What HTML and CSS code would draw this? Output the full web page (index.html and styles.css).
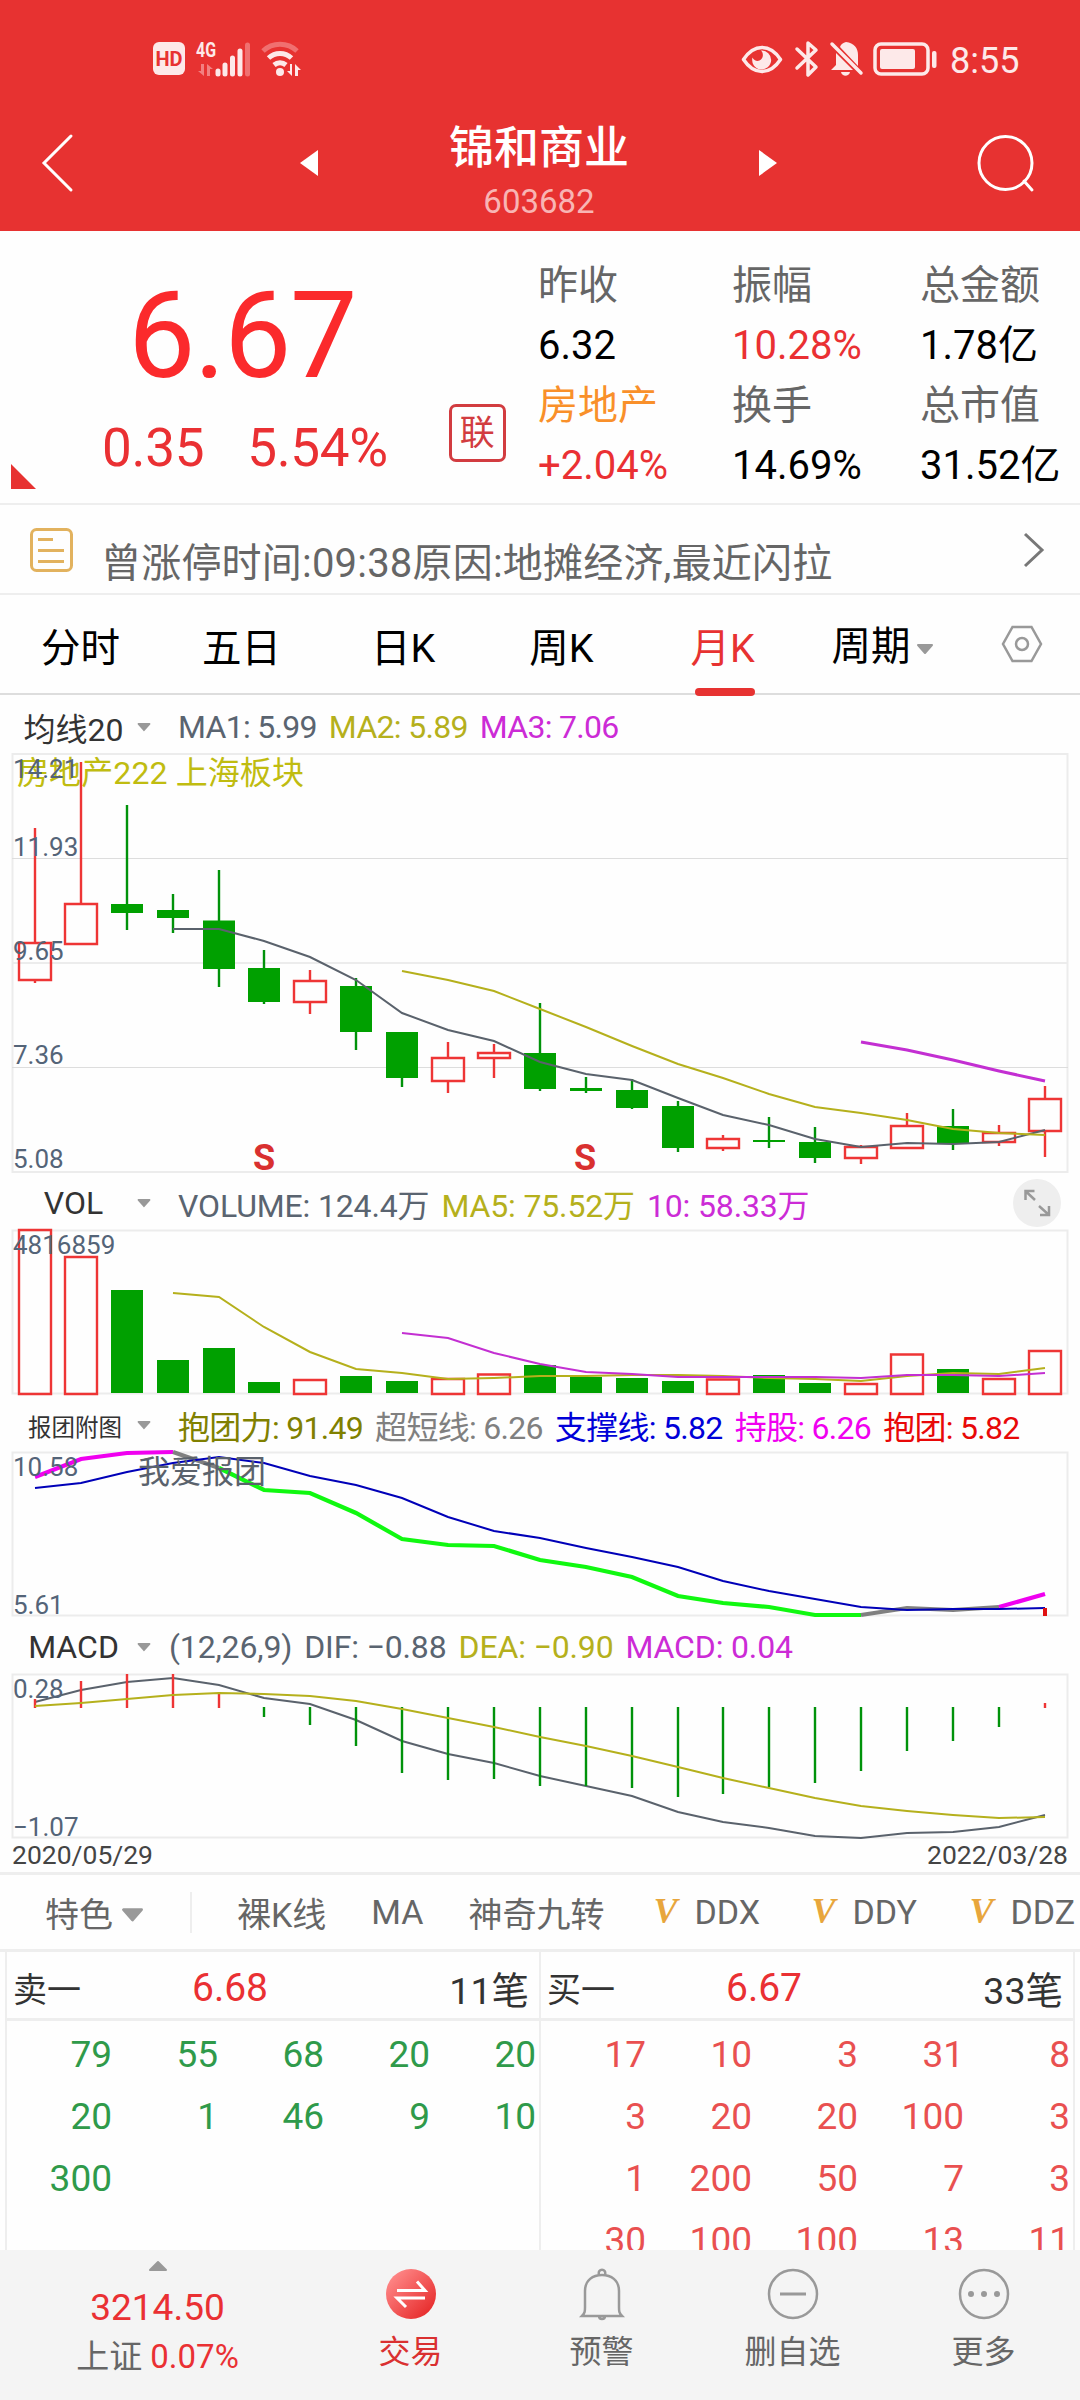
FILE: index.html
```html
<!DOCTYPE html>
<html lang="zh-CN">
<head>
  <meta charset="UTF-8">
  <meta name="viewport" content="width=device-width, initial-scale=1.0">
  <title>锦和商业 603682</title>
  <link rel="stylesheet" href="styles.css">
</head>
<body>
  <header class="top">
    <div class="status-bar">
      <div class="status-left">
        <span class="hd">HD</span>
        <svg class="signal" width="56" height="36" viewBox="0 0 56 36">
          <text x="1" y="16" class="net" textLength="20" lengthAdjust="spacingAndGlyphs">4G</text>
          <path class="dim" d="M9 23v12l-6-5h3v-7zM12 35V23l6 5h-3v7z"/>
          <path class="bars" d="M23 30v3M30 24v9M37.500 17v16M45 10v23"/>
          <path class="bars dim-line" d="M52.500 4v29"/>
        </svg>
        <svg class="wifi" width="42" height="36" viewBox="0 0 42 36">
          <path class="arc dim-line" d="M3 10a25 25 0 0 1 34 0"/>
          <path class="arc" d="M8.500 17a17 17 0 0 1 23 0M14 24a9.500 9.500 0 0 1 12 0"/>
          <circle cx="20" cy="31" r="4" fill="#fde9e9"/>
          <path d="M32 23v12l-5-5h3v-7zM35 35V23l6 6h-3v6z" fill="#fde9e9"/>
        </svg>
      </div>
      <div class="status-right">
        <svg width="42" height="36" viewBox="0 0 42 36">
          <path class="ln" d="M2.500 18.500C13 2.500 29 2.500 39.500 18.500C29 34.500 13 34.500 2.500 18.500z"/>
          <path d="M20 9.500a9.500 9.500 0 1 1-8.500 7c1.500 3.500 6 4.500 8.500 2s2.500-6.500 0-9z" fill="#fde9e9"/>
        </svg>
        <svg class="bt" width="24" height="38" viewBox="0 0 24 38">
          <path class="ln" d="M3 9l19 18-8 8V3l8 7L3 28"/>
        </svg>
        <svg class="mute" width="34" height="38" viewBox="0 0 34 38">
          <path d="M17 2c8 1 12 6 12 13v11L11 7c1-3 3-4 6-5zM7 13l17 17H2l5-5zM12 32h9c-1 5-8 5-9 0z" fill="#fde9e9"/>
          <path class="ln" d="M3 4l29 29"/>
        </svg>
        <svg class="battery" width="64" height="36" viewBox="0 0 64 36">
          <rect class="ln" x="2" y="3" width="53" height="30" rx="6"/>
          <rect x="7" y="8" width="35" height="20" rx="2" fill="#fde9e9"/>
          <rect x="59" y="10" width="4.500" height="17" rx="2" fill="#fde9e9"/>
        </svg>
        <span class="time">8:55</span>
      </div>
    </div>
    <div class="title-bar">
      <svg class="back" width="32" height="58" viewBox="0 0 32 58"><path d="M29 2L2 29l27 27"/></svg>
      <svg class="prev" width="20" height="28" viewBox="0 0 20 28"><path d="M19 1v26L1 14z"/></svg>
      <div class="stock">
        <h1>锦和商业</h1>
        <span class="code">603682</span>
      </div>
      <svg class="next" width="20" height="28" viewBox="0 0 20 28"><path d="M1 1v26l18-13z"/></svg>
      <svg class="search" width="58" height="58" viewBox="0 0 58 58">
        <circle cx="29.500" cy="29" r="26.500"/><path d="M48 47l8 9"/>
      </svg>
    </div>
  </header>

  <section class="quote">
    <svg class="corner" width="25" height="25" viewBox="0 0 25 25"><path d="M0 0l25 25H0z"/></svg>
    <div class="price">
      <div class="now">6.67</div>
      <div class="change"><span>0.35</span><span>5.54%</span></div>
    </div>
    <div class="badge">联</div>
    <dl class="facts">
      <div><dt>昨收</dt><dd>6.32</dd></div>
      <div><dt>振幅</dt><dd class="up">10.28%</dd></div>
      <div><dt>总金额</dt><dd>1.78亿</dd></div>
      <div><dt class="sector">房地产</dt><dd class="up">+2.04%</dd></div>
      <div><dt>换手</dt><dd>14.69%</dd></div>
      <div><dt>总市值</dt><dd>31.52亿</dd></div>
    </dl>
  </section>

  <section class="notice">
    <svg class="memo" width="44" height="46" viewBox="0 0 44 46">
      <rect x="1.500" y="2.500" width="40" height="41" rx="5"/>
      <path d="M8 12.500h15M8 23.500h26M8 34.500h26"/>
    </svg>
    <p>曾涨停时间:09:38原因:地摊经济,最近闪拉</p>
    <svg class="chevron" width="24" height="36" viewBox="0 0 24 36"><path d="M3 2l17 16L3 34"/></svg>
  </section>

  <nav class="tabs">
    <a>分时</a>
    <a>五日</a>
    <a>日K</a>
    <a>周K</a>
    <a class="active">月K</a>
    <a class="more">周期<svg class="caret" width="20" height="13" viewBox="0 0 20 13"><path d="M3 2h14l-7 8z"/></svg></a>
    <svg class="settings" width="42" height="38" viewBox="0 0 42 38">
      <path d="M11.500 2h19L40 19l-9.500 17h-19L2 19z"/><circle cx="21" cy="19" r="6"/>
    </svg>
  </nav>

  <main class="charts">
    <div class="legend l-ma">
      <span class="picker"><b>均线20</b></span>
      <svg class="caret" width="16" height="11" viewBox="0 0 20 13"><path d="M3 2h14l-7 8z"/></svg>
      <span class="c-gray">MA1: 5.99</span>
      <span class="c-olive">MA2: 5.89</span>
      <span class="c-purple">MA3: 7.06</span>
    </div>
    <svg class="chart" width="1080" height="420" viewBox="0 0 1080 420">
      <rect class="frame" x="12.500" y="1" width="1055" height="418"/>
      <path class="grid" d="M12 105.500H1068M12 314.500H1068"/>
      <path class="grid thick" d="M12 210H1068"/>
      <text class="tag" x="17" y="31" textLength="287">房地产222 上海板块</text>
      <path class="red" d="M35 75V190M35 227V230M81 9V151M310 217V228M310 249V261M448 289V305M448 328V340M494 291V300M494 305V325M723 382V386M723 395V398M861 392V394M861 405V411M907 360V373M999 372V380M999 389V393M1045 333V346M1045 378V404"/>
      <path class="red" d="M19 190h32v37h-32zM65 151h32v40h-32zM294 228h32v21h-32zM432 305h32v23h-32zM478 300h32v5h-32zM707 386h32v9h-32zM845 394h32v11h-32zM891 373h32v22h-32zM983 380h32v9h-32zM1029 346h32v32h-32z"/>
      <path class="green" d="M127 52V177M173 141V180M219 117V234M264 197V251M356 225V297M402 279V334M540 250V338M586 324V340M632 326V356M678 348V399M769 364V395M815 374V410M953 356V397"/>
      <path class="green-fill" d="M111 151h32v9h-32zM157 157h32v8h-32zM203 167.500h32v48.500h-32zM248 215h32v34h-32zM340 233h32v46h-32zM386 279h32v46h-32zM524 300h32v36h-32zM570 335h32v3h-32zM616 337h32v18h-32zM662 353h32v42h-32zM753 387h32v2h-32zM799 389h32v16h-32zM937 373h32v17h-32z"/>
      <polyline class="line gray" points="173,176 219,176 264,188 310,204 356,227 402,260 448,277 494,288 540,309 586,321 632,327 678,345 723,362 769,372 815,386 861,394 907,390 953,391 999,389 1045,377"/>
      <polyline class="line olive" points="402,218 448,227 494,238 540,256 586,274 632,293 678,311 723,325 769,341 815,354 861,360 907,367 953,376 999,380 1045,382"/>
      <polyline class="line purple bold" points="861,289 907,297 953,307 999,318 1045,328"/>
      <text class="axis" x="13" y="25">14.21</text>
      <text class="axis" x="13" y="103">11.93</text>
      <text class="axis" x="13" y="207">9.65</text>
      <text class="axis" x="13" y="311">7.36</text>
      <text class="axis" x="13" y="415">5.08</text>
      <text class="sell" x="264" y="417">S</text>
      <text class="sell" x="585" y="417">S</text>
    </svg>

    <div class="legend l-vol">
      <span class="picker"><b>VOL</b></span>
      <svg class="caret" width="16" height="11" viewBox="0 0 20 13"><path d="M3 2h14l-7 8z"/></svg>
      <span class="c-gray">VOLUME: 124.4万</span>
      <span class="c-olive">MA5: 75.52万</span>
      <span class="c-purple">10: 58.33万</span>
      <svg class="expand" width="48" height="48" viewBox="0 0 48 48">
        <circle cx="24" cy="24" r="24"/>
        <path d="M22 21L13 12.500M12.500 21v-9h9M26 27l9.500 8.500M36 27v9h-9"/>
      </svg>
    </div>
    <svg class="chart" width="1080" height="166" viewBox="0 0 1080 166">
      <rect class="frame" x="12.500" y="1.500" width="1055" height="163"/>
      <path class="red" d="M19 1h32v164h-32zM65 28h32v137h-32zM294 151h32v14h-32zM432 150h32v15h-32zM478 145.500h32v19.500h-32zM707 150.500h32v14.500h-32zM845 155h32v10h-32zM891 125.500h32v39.500h-32zM983 150h32v15h-32zM1029 122h32v43h-32z"/>
      <path class="green-fill" d="M111 61h32v103h-32zM157 131h32v33h-32zM203 119h32v45h-32zM248 153h32v11h-32zM340 147h32v17h-32zM386 152h32v12h-32zM524 136h32v28h-32zM570 148h32v16h-32zM616 149h32v15h-32zM662 152h32v12h-32zM753 146h32v18h-32zM799 154h32v10h-32zM937 140h32v24h-32z"/>
      <polyline class="line olive" points="173,64 219,68 264,98 310,123 356,140 402,144 448,150 494,149 540,147 586,147 632,146 678,146 723,147 769,149 815,150 861,152 907,147 953,144 999,145 1045,139"/>
      <polyline class="line purple" points="402,104 448,109 494,124 540,135 586,143 632,145 678,148 723,148 769,148 815,148 861,149 907,146 953,146 999,147 1045,144"/>
      <text class="axis" x="13" y="25">4816859</text>
    </svg>

    <div class="legend l-group">
      <span class="picker"><b class="small">报团附图</b></span>
      <svg class="caret" width="16" height="11" viewBox="0 0 20 13"><path d="M3 2h14l-7 8z"/></svg>
      <span class="c-brown">抱团力: 91.49</span>
      <span class="c-silver">超短线: 6.26</span>
      <span class="c-blue">支撑线: 5.82</span>
      <span class="c-magenta">持股: 6.26</span>
      <span class="c-red">抱团: 5.82</span>
    </div>
    <svg class="chart" width="1080" height="166" viewBox="0 0 1080 166">
      <rect class="frame" x="12.500" y="1.500" width="1055" height="163"/>
      <polyline class="line wide magenta" points="35,26 81,8 127,2 173,1"/>
      <polyline class="line wide silver" points="173,1 219,17"/>
      <polyline class="line wide lime" points="219,17 264,39 310,42 356,62 402,88 448,94 494,95 540,109 586,116 632,126 678,145 723,152 769,156 815,164 861,164"/>
      <polyline class="line wide silver" points="861,164 907,157 953,159 999,156"/>
      <polyline class="line wide magenta" points="999,156 1045,143"/>
      <polyline class="line blue" points="35,37 81,32 127,21 173,12 219,6 264,12 310,25 356,34 402,47 448,66 494,80 540,87 586,97 632,106 678,116 723,130 769,140 815,148 861,156 907,159 953,158 999,158 1045,157"/>
      <path class="hold" d="M1045 157v8"/>
      <text class="axis" x="13" y="25">10.58</text>
      <text class="axis" x="13" y="163">5.61</text>
      <text class="note" x="138" y="32">我爱报团</text>
    </svg>

    <div class="legend l-macd">
      <span class="picker"><b>MACD</b></span>
      <svg class="caret" width="16" height="11" viewBox="0 0 20 13"><path d="M3 2h14l-7 8z"/></svg>
      <span class="c-gray">(12,26,9)</span>
      <span class="c-gray">DIF: −0.88</span>
      <span class="c-olive">DEA: −0.90</span>
      <span class="c-purple">MACD: 0.04</span>
    </div>
    <svg class="chart" width="1080" height="166" viewBox="0 0 1080 166">
      <rect class="frame" x="12.500" y="1.500" width="1055" height="163"/>
      <polyline class="line gray" points="35,29 81,17 127,9 173,5 219,12 264,25 310,31 356,47 402,68 448,81 494,90 540,103 586,113 632,123 678,139 723,149 769,155 815,163 861,165 907,160 953,159 999,154 1045,142"/>
      <path class="red" d="M35 26V35M81 8V35M127 1V35M173 1V35M219 19V35M1045 30V35"/>
      <path class="green" d="M264 34V44M310 34V52M356 34V73M402 34V100M448 34V107M494 34V106M540 34V113M586 34V113M632 34V115M678 34V124M723 34V121M769 34V114M815 34V110M861 34V98M907 34V78M953 34V68M999 34V54"/>
      <polyline class="line olive" points="35,33 81,30 127,26 173,22 219,20 264,21 310,23 356,28 402,36 448,45 494,54 540,64 586,73 632,83 678,94 723,105 769,115 815,125 861,133 907,138 953,142 999,145 1045,144"/>
      <text class="axis" x="13" y="25">0.28</text>
      <text class="axis" x="13" y="163">−1.07</text>
    </svg>
    <div class="dates"><span>2020/05/29</span><span>2022/03/28</span></div>
  </main>

  <nav class="features">
    <a class="pick">特色<svg class="caret" width="27" height="17" viewBox="0 0 20 13"><path d="M3 2h14l-7 8z"/></svg></a>
    <a class="f-k">裸K线</a>
    <a class="f-ma">MA</a>
    <a class="f-nine">神奇九转</a>
    <a class="f-vip"><i>V</i>DDX</a>
    <a class="f-vip"><i>V</i>DDY</a>
    <a class="f-vip"><i>V</i>DDZ</a>
  </nav>

  <section class="orders">
    <div class="side sell-side">
      <div class="head"><span>卖一</span><span class="up">6.68</span><span>11笔</span></div>
      <div class="lots">
        <span>79</span><span>55</span><span>68</span><span>20</span><span>20</span>
        <span>20</span><span>1</span><span>46</span><span>9</span><span>10</span>
        <span>300</span>
      </div>
    </div>
    <div class="side buy-side">
      <div class="head"><span>买一</span><span class="up">6.67</span><span>33笔</span></div>
      <div class="lots">
        <span>17</span><span>10</span><span>3</span><span>31</span><span>8</span>
        <span>3</span><span>20</span><span>20</span><span>100</span><span>3</span>
        <span>1</span><span>200</span><span>50</span><span>7</span><span>3</span>
        <span>30</span><span>100</span><span>100</span><span>13</span><span>11</span>
      </div>
    </div>
  </section>

  <footer class="bottom-bar">
    <div class="index">
      <svg class="caret" width="26" height="14" viewBox="0 0 26 14"><path d="M5 11h16l-8-8z"/></svg>
      <strong>3214.50</strong>
      <p>上证 <span class="up">0.07%</span></p>
    </div>
    <a class="action trade">
      <svg width="54" height="54" viewBox="0 0 54 54">
        <defs>
          <linearGradient id="tradeFill" x1="0" y1="0" x2="1" y2="1">
            <stop offset="0.100" stop-color="#ff8a8a"/><stop offset="0.850" stop-color="#e83030"/>
          </linearGradient>
        </defs>
        <circle cx="27" cy="27" r="25" fill="url(#tradeFill)"/>
        <path d="M13 23.500h28l-8-9M41 31H13l9 9"/>
      </svg>
      交易
    </a>
    <a class="action">
      <svg width="54" height="54" viewBox="0 0 54 54">
        <path d="M7 49c3-3 3-5 3-9V24C10 13 18 8 27 8s17 5 17 16v16c0 4 0 6 3 9zM24 8c-2-7 8-7 6 0M24 49c0 4 6 4 6 0"/>
      </svg>
      预警
    </a>
    <a class="action">
      <svg width="54" height="54" viewBox="0 0 54 54">
        <circle cx="27" cy="27" r="24"/><path d="M14 27h26" stroke-width="3"/>
      </svg>
      删自选
    </a>
    <a class="action">
      <svg width="54" height="54" viewBox="0 0 54 54">
        <circle cx="27" cy="27" r="24"/>
        <g class="dots"><circle cx="14" cy="27" r="3"/><circle cx="27" cy="27" r="3"/><circle cx="40" cy="27" r="3"/></g>
      </svg>
      更多
    </a>
  </footer>
</body>
</html>
```
FILE: styles.css
```css
* {
  box-sizing: border-box;
  margin: 0;
  padding: 0;
}

body {
  width: 1080px;
  height: 2400px;
  overflow: hidden;
  display: flex;
  flex-direction: column;
  background: #fefefe;
  color: #000;
  font-family: Roboto, "Noto Sans CJK SC", sans-serif;
  white-space: nowrap;
}

body > * { flex: none; }

svg {
  display: block;
  flex: none;
  fill: none;
  overflow: visible;
}

.up { color: #ea3033; }

.caret { fill: #999; stroke: #999; stroke-width: 2; stroke-linejoin: round; }

/* header */
.top {
  height: 231px;
  background: #e73231;
  color: #fff;
}

.status-bar {
  height: 95px;
  padding: 22px 61px 0 153px;
  display: flex;
  justify-content: space-between;
}

.status-left, .status-right {
  display: flex;
  align-items: center;
  color: #fde9e9;
}

.hd {
  width: 32px;
  height: 33px;
  border-radius: 6px;
  background: #fde9e9;
  color: #e73231;
  font-size: 20px;
  font-weight: 700;
  line-height: 34px;
  text-align: center;
}

.signal { margin-left: 10px; }
.wifi { margin-left: 9px; }
.net { font-size: 20px; font-weight: 700; fill: #fde9e9; }
.dim { fill: #f28080; }
.bars { stroke: #fde9e9; stroke-width: 5; stroke-linecap: round; }
.arc { stroke: #fde9e9; stroke-width: 5; }
.bars.dim-line, .arc.dim-line { stroke: #f07070; }
.ln { stroke: #fde9e9; stroke-width: 3.500px; stroke-linecap: round; stroke-linejoin: round; }
.bt { margin-left: 11px; }
.mute { margin-left: 11px; }
.battery { margin-left: 10px; }

.time {
  width: 69px;
  margin-left: 13px;
  padding-top: 4px;
  font-size: 36px;
}

.title-bar {
  height: 136px;
  display: flex;
  align-items: center;
  padding: 0 46px 0 42px;
}

.back path, .search * { stroke: #fff; stroke-width: 3; stroke-linecap: round; }
.prev, .next { fill: #fff; }
.prev { margin-left: 225px; }
.next { margin-right: 198px; }

.stock {
  flex: 1;
  padding: 17px 0 0 1px;
  text-align: center;
}

.stock h1 {
  font-size: 45px;
  font-weight: 500;
  line-height: 54px;
}

.code {
  display: block;
  margin-top: 6px;
  font-size: 33px;
  line-height: 40px;
  color: #f8b5b4;
}

/* quote */
.quote {
  height: 274px;
  display: flex;
  border-bottom: 2px solid #eee;
}

.corner {
  fill: #e73231;
  align-self: flex-end;
  margin: 0 0 14px 11px;
}

.price {
  width: 416px;
  padding: 42px 0 0 66px;
  color: #fb2a2c;
}

.now {
  width: 280px;
  font-size: 120px;
  line-height: 127px;
  text-align: center;
  letter-spacing: -1.500px;
}

.change {
  display: flex;
  gap: 43px;
  font-size: 53px;
  line-height: 96px;
  color: #ea3033;
  letter-spacing: -0.300px;
}

.badge {
  width: 58px;
  height: 58px;
  margin: 173px 32px 0 0;
  border: 3px solid #d23c40;
  border-radius: 7px;
  color: #d23c40;
  font-size: 35px;
  line-height: 53px;
  text-align: center;
}

.facts {
  padding-top: 25px;
  display: grid;
  grid-template-columns: 194px 188px 160px;
  grid-auto-rows: 120px;
  font-size: 40px;
  line-height: 60px;
}

.facts dt { color: #666; }
.facts dt.sector { color: #f9902a; }

/* notice */
.notice {
  height: 90px;
  display: flex;
  border-bottom: 2px solid #eee;
}

.memo {
  margin: 22px 0 0 30px;
  stroke: #e2b25e;
  stroke-width: 3;
}

.notice p {
  margin: 31px 0 0 27px;
  width: 900px;
  font-size: 40px;
  line-height: 56px;
  letter-spacing: 0.200px;
  color: #666;
}

.chevron {
  margin: 27px 0 0 21px;
  stroke: #777;
  stroke-width: 3;
}

/* period tabs */
.tabs {
  height: 100px;
  display: flex;
  align-items: center;
  border-bottom: 2px solid #ddd;
  padding: 4px 0 0 41px;
  font-size: 39.500px;
}

.tabs a {
  height: 94px;
  line-height: 99px;
}

.tabs a:nth-child(2) { margin-left: 82px; }
.tabs a:nth-child(3) { margin-left: 90px; }
.tabs a:nth-child(4) { margin-left: 94px; }
.tabs a.active {
  width: 68px;
  margin-left: 97px;
  color: #e73231;
  display: flex;
  flex-direction: column;
}

.tabs a.active::after {
  content: "";
  width: 60px;
  height: 8px;
  margin-top: -10px;
  align-self: center;
  flex: none;
  border-radius: 4px;
  background: #e73231;
}

.tabs .more {
  display: flex;
  align-items: center;
  margin-left: 73px;
}

.tabs .more .caret { margin: 6px 0 0 4px; }

.settings {
  margin: 0 0 4px 66px;
  stroke: #999;
  stroke-width: 2.500px;
}

/* charts */
.charts { height: 1177px; padding-top: 1px; }

.legend {
  display: flex;
  align-items: center;
  gap: 12px;
  height: 56px;
  padding-top: 3px;
  font-size: 32px;
}

.legend > span { letter-spacing: -0.700px; }
.legend .picker { width: 125px; text-align: center; letter-spacing: 0; margin: 0 -12px 0 11px; }
.picker b { font-weight: 400; color: #333; }
.picker b.small { font-size: 23.500px; margin-left: 3px; }
.legend .caret { margin: 2px 14px 0 0; }
.legend.l-ma { height: 57px; padding-top: 4px; }
.l-macd .caret { margin-right: 5px; }
.l-vol > span, .l-macd > span { letter-spacing: -0.150px; }

.expand {
  margin-left: auto;
  margin-right: 19px;
  fill: #eee;
  stroke: none;
}

.expand path { fill: none; stroke: #999; stroke-width: 2.500px; }

.chart text { font-size: 26px; }

.frame { stroke: #ececec; stroke-width: 2; }
.grid { stroke: #ddd; stroke-width: 1; }
.grid.thick { stroke: #ececec; stroke-width: 2; }
.red { stroke: #ee3535; stroke-width: 2.400px; }
.green { stroke: #00920a; stroke-width: 2.400px; }
.green-fill { fill: #00a000; }
.line { stroke-width: 2; }
.line.bold { stroke-width: 3; }
.line.wide { stroke-width: 4.200px; }
.line.gray { stroke: #5a626c; }
.line.olive { stroke: #b5b01c; }
.line.purple { stroke: #c32fd2; }
.line.magenta { stroke: #f000f0; }
.line.silver { stroke: #808080; }
.line.lime { stroke: #10f810; }
.line.blue { stroke: #0000b8; }
.hold { stroke: #e01010; stroke-width: 4; }

.axis { fill: #546478; }
.chart .tag { font-size: 32px; fill: #c0bc10; }
.chart .note { font-size: 32px; fill: #5a626c; }
.chart .sell { font-size: 36px; font-weight: 700; fill: #d93030; text-anchor: middle; }

.c-gray { color: #5a6470; }
.c-olive { color: #b5b01c; }
.c-purple { color: #cc2bd6; }
.c-brown { color: #808000; }
.c-silver { color: #808080; }
.c-blue { color: #0000d8; }
.c-magenta { color: #f000f0; }
.c-red { color: #e80808; }

.dates {
  display: flex;
  justify-content: space-between;
  padding: 0 12px;
  font-size: 26.500px;
  line-height: 32px;
  color: #444;
}

/* feature bar */
.features {
  height: 80px;
  display: flex;
  align-items: center;
  border-top: 3px solid #eee;
  border-bottom: 3px solid #eee;
  padding-left: 45px;
  font-size: 34px;
  color: #666;
}

.pick {
  width: 147px;
  height: 41px;
  display: flex;
  align-items: center;
  border-right: 2px solid #eee;
}

.pick .caret { margin: 6px 0 0 6px; }
.f-k { margin-left: 45px; }
.f-ma { margin-left: 45px; }
.f-nine { margin-left: 45px; }
.f-vip { width: 109px; margin-left: 49px; display: flex; }

.f-vip i {
  width: 41px;
  color: #e8a63c;
  font-family: "Liberation Serif", serif;
  font-weight: 700;
  font-size: 36px;
  line-height: 38px;
}

/* order queue */
.orders {
  height: 298px;
  display: flex;
  margin: 0 5px;
  border-left: 2px solid #eee;
  border-right: 2px solid #eee;
  overflow: hidden;
}

.side { width: 532px; flex: none; }
.buy-side { width: 534px; border-left: 2px solid #eee; }

.head {
  height: 69px;
  display: grid;
  grid-template-columns: 179px 1fr auto;
  align-items: center;
  border-bottom: 3px solid #eee;
  padding: 4px 10px 0 6px;
  font-size: 36px;
  color: #333;
}

.head span:first-child { font-size: 34px; }
.head span:last-child { font-size: 37.500px; }
.head .up { font-size: 39px; padding-top: 2px; }

.lots {
  display: grid;
  grid-template-columns: 105px repeat(4, 106px);
  grid-auto-rows: 62px;
  font-size: 37px;
  line-height: 67px;
  text-align: right;
  color: #2f9a4a;
}

.buy-side .lots { color: #e95050; }

/* bottom bar */
.bottom-bar {
  height: 150px;
  display: grid;
  grid-template-columns: 315px repeat(4, 191px);
  background: #f4f4f4;
  color: #666;
  font-size: 32px;
}

.index {
  display: flex;
  flex-direction: column;
  align-items: center;
  padding-top: 9px;
}

.index strong {
  margin-top: 11px;
  font-size: 37px;
  font-weight: 400;
  line-height: 48px;
  color: #ea3033;
}

.index p { font-size: 33px; line-height: 50px; }

.action {
  display: flex;
  flex-direction: column;
  align-items: center;
  padding-top: 17px;
  line-height: 62px;
}

.action svg { stroke: #999; stroke-width: 2.500px; }
.action .dots { fill: #999; stroke: none; }
.trade { color: #da3030; }
.trade svg { stroke: none; }
.trade path { stroke: #fff; stroke-width: 3; }
```
